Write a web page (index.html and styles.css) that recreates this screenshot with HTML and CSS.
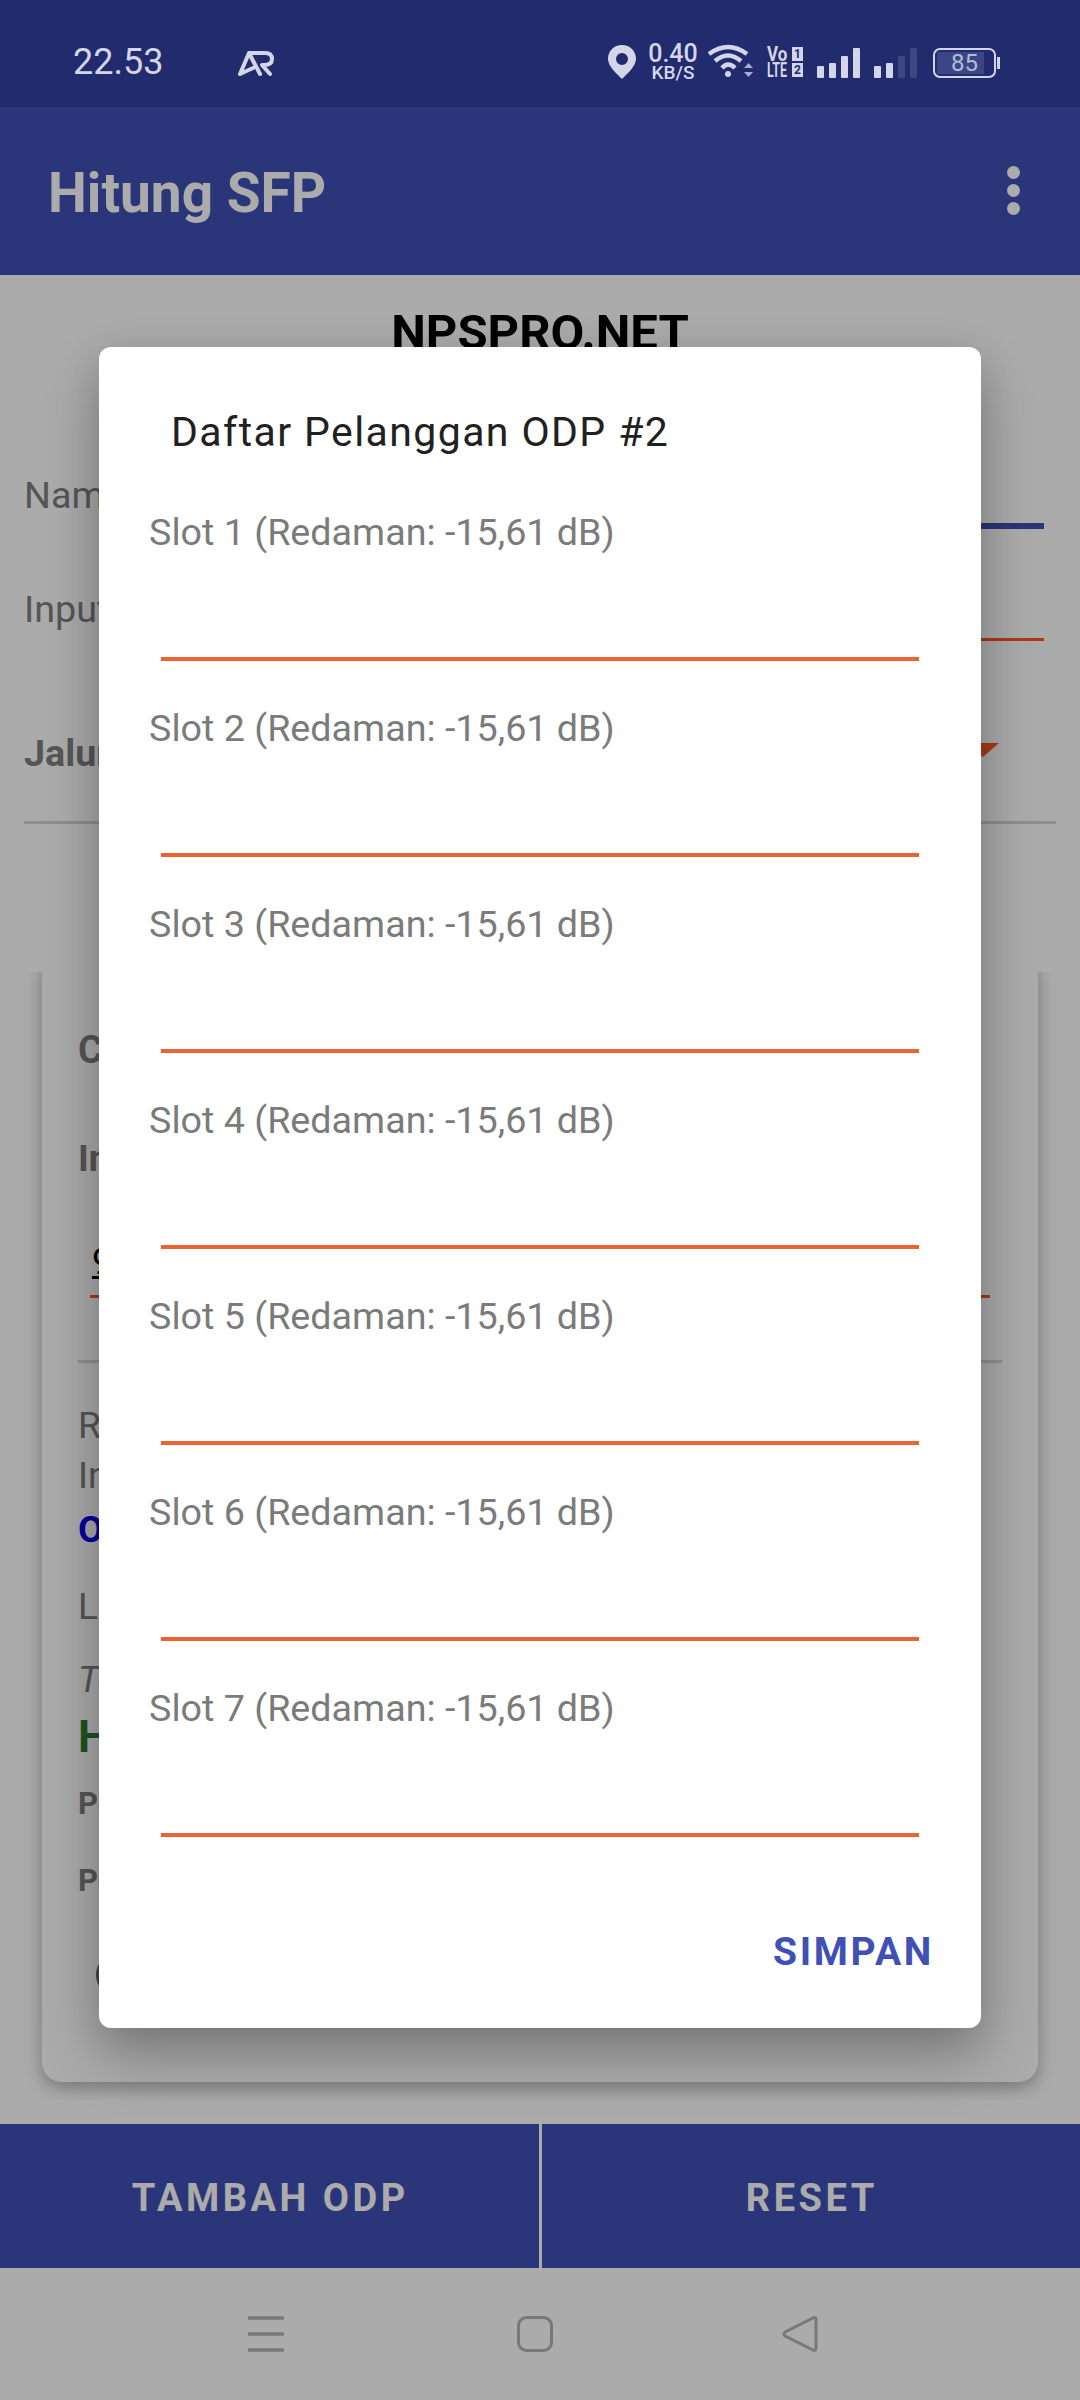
FILE: index.html
```html
<!DOCTYPE html>
<html lang="en">
<head>
  <meta charset="UTF-8">
  <meta name="viewport" content="width=device-width, initial-scale=1.0">
  <title>Hitung SFP</title>
  <link rel="stylesheet" href="styles.css">
</head>
<body>
  <div class="phone">
    <div class="status-bar">
      <span class="clock">22.53</span>
      <svg class="logo-ar" width="38" height="27" viewBox="0 0 38 27">
        <path d="M2 24 L11 3 L22 24 M2 24 L15 18 M11 3 H27 Q34 3 34 9 Q34 15 26 15 H24 L32 24" fill="none" stroke="#d3d6e8" stroke-width="4" stroke-linejoin="round" stroke-linecap="round"/>
      </svg>
      <div class="status-icons">
        <svg class="icon-pin" width="28" height="34" viewBox="0 0 28 34">
          <path fill-rule="evenodd" d="M14 0 C22 0 28 6 28 14 C28 21 20 28 14 34 C8 28 0 21 0 14 C0 6 6 0 14 0 Z M14 8 A6 6 0 1 0 14 20 A6 6 0 1 0 14 8 Z" fill="#d3d6e8"/>
        </svg>
        <div class="net-speed">
          <span class="net-value">0.40</span>
          <span class="net-unit">KB/S</span>
        </div>
        <svg class="icon-wifi" width="46" height="34" viewBox="0 0 46 34">
          <g fill="none" stroke="#d3d6e8" stroke-width="4.5">
            <path d="M1 10 Q20 -4 39 10"/>
            <path d="M7 17 Q20 6 33 17"/>
            <path d="M14 24 Q20 17 27 24"/>
          </g>
          <circle cx="20" cy="30" r="3" fill="#d3d6e8"/>
          <path d="M36 24 L40.500 19 L45 24 Z" fill="#a9aecf"/>
          <path d="M36 28 L45 28 L40.500 33 Z" fill="#a9aecf"/>
        </svg>
        <div class="volte">
          <div class="volte-row"><span class="volte-vo">Vo</span><span class="volte-sim">1</span></div>
          <div class="volte-row"><span class="volte-lte">LTE</span><span class="volte-sim">2</span></div>
        </div>
        <div class="signal signal-first">
          <i class="bar bar-1"></i><i class="bar bar-2"></i><i class="bar bar-3"></i><i class="bar bar-4"></i>
        </div>
        <div class="signal signal-second">
          <i class="bar bar-1"></i><i class="bar bar-2"></i><i class="bar bar-3 bar-off"></i><i class="bar bar-4 bar-off"></i>
        </div>
        <div class="battery">
          <div class="battery-body">
            <div class="battery-fill"></div>
            <span class="battery-text">85</span>
          </div>
          <div class="battery-nub"></div>
        </div>
      </div>
    </div>

    <div class="toolbar">
      <span class="toolbar-title">Hitung SFP</span>
      <div class="overflow-menu"><i></i><i></i><i></i></div>
    </div>

    <div class="content">
      <h1 class="page-heading">NPSPRO.NET</h1>
      <div class="form-row form-row-name">
        <span class="form-label">Nama</span>
        <div class="form-field form-field-focus"></div>
      </div>
      <div class="form-row form-row-input">
        <span class="form-label">Input</span>
        <div class="form-field"></div>
      </div>
      <div class="spinner-row">
        <span class="form-label form-label-bold">Jalur</span>
        <svg class="spinner-arrow" width="32" height="14" viewBox="0 0 32 14"><path d="M0 0 H32 L16 14 Z" fill="#ff5722"/></svg>
      </div>

      <div class="scroll-area">
        <div class="card">
          <div class="card-title">Cek</div>
          <div class="card-label">Input</div>
          <div class="card-input"><span>9</span></div>
          <div class="card-divider"></div>
          <div class="result result-first">Redaman</div>
          <div class="result">Input</div>
          <div class="result result-ok">OK</div>
          <div class="result result-loss">Loss</div>
          <div class="result result-note">Total</div>
          <div class="result result-good">H</div>
          <div class="result result-small">Port</div>
          <div class="result result-small result-small-next">Port</div>
          <div class="radio"></div>
        </div>
      </div>

      <div class="bottom-buttons">
        <div class="bottom-button">TAMBAH ODP</div>
        <div class="bottom-button">RESET</div>
      </div>
    </div>

    <div class="nav-bar">
      <svg class="nav-menu" width="36" height="36" viewBox="0 0 36 36">
        <path d="M0 2 H36 M0 18 H36 M0 34 H36" stroke="#b4b4b4" stroke-width="3.5"/>
      </svg>
      <svg class="nav-home" width="36" height="36" viewBox="0 0 36 36">
        <rect x="1.5" y="1.5" width="33" height="33" rx="8" fill="none" stroke="#b4b4b4" stroke-width="3"/>
      </svg>
      <svg class="nav-back" width="36" height="36" viewBox="0 0 36 36">
        <path d="M31 2 Q34 0.500 34 4 V32 Q34 35.500 31 34 L3 20 Q1 18 3 16 Z" fill="none" stroke="#b4b4b4" stroke-width="3" stroke-linejoin="round"/>
      </svg>
    </div>

    <div class="scrim"></div>

    <div class="dialog">
      <div class="dialog-title">Daftar Pelanggan ODP #2</div>
      <div class="slot">
        <label class="slot-label">Slot 1 (Redaman: -15,61 dB)</label>
        <div class="slot-input"></div>
      </div>
      <div class="slot">
        <label class="slot-label">Slot 2 (Redaman: -15,61 dB)</label>
        <div class="slot-input"></div>
      </div>
      <div class="slot">
        <label class="slot-label">Slot 3 (Redaman: -15,61 dB)</label>
        <div class="slot-input"></div>
      </div>
      <div class="slot">
        <label class="slot-label">Slot 4 (Redaman: -15,61 dB)</label>
        <div class="slot-input"></div>
      </div>
      <div class="slot">
        <label class="slot-label">Slot 5 (Redaman: -15,61 dB)</label>
        <div class="slot-input"></div>
      </div>
      <div class="slot">
        <label class="slot-label">Slot 6 (Redaman: -15,61 dB)</label>
        <div class="slot-input"></div>
      </div>
      <div class="slot">
        <label class="slot-label">Slot 7 (Redaman: -15,61 dB)</label>
        <div class="slot-input"></div>
      </div>
      <div class="dialog-actions">
        <span class="dialog-button">SIMPAN</span>
      </div>
    </div>
  </div>
</body>
</html>
```

FILE: styles.css
```css
* {
  box-sizing: border-box;
}

body {
  margin: 0;
  font-family: Roboto, "Noto Sans", sans-serif;
  background-color: #fff;
}

.phone {
  position: relative;
  width: 1080px;
  height: 2400px;
  display: flex;
  flex-direction: column;
  overflow: hidden;
}

/* status bar */
.status-bar {
  position: relative;
  z-index: 3;
  height: 107px;
  flex: none;
  display: flex;
  align-items: center;
  background-color: #212b6d;
  color: #d3d6e8;
  padding: 17px 0 0 73px;
}

.clock {
  width: 165px;
  font-size: 36px;
  font-weight: 400;
  line-height: 40px;
  margin-top: -1px;
}

.logo-ar {
  flex: none;
  margin-top: 3px;
}

.status-icons {
  display: flex;
  align-items: center;
  margin-left: 332px;
}

.icon-pin {
  flex: none;
  margin-top: -1px;
}

.net-speed {
  width: 52px;
  margin-left: 11px;
  display: flex;
  flex-direction: column;
  align-items: center;
  font-weight: 500;
}

.net-value {
  font-size: 25px;
  line-height: 20px;
}

.net-unit {
  font-size: 19px;
  line-height: 15px;
  margin-top: 1px;
}

.icon-wifi {
  flex: none;
  margin-left: 9px;
  margin-top: -3px;
}

.volte {
  margin-left: 13px;
  width: 36px;
  margin-top: -1px;
}

.volte-row {
  display: flex;
  justify-content: space-between;
  align-items: center;
  height: 16px;
}

.volte-vo,
.volte-lte {
  width: 21px;
  font-size: 20px;
  font-weight: 700;
  line-height: 16px;
  white-space: nowrap;
  transform-origin: left center;
}

.volte-vo {
  transform: scaleX(.85);
}

.volte-lte {
  transform: scaleX(.62);
}

.volte-sim {
  width: 11px;
  height: 14px;
  background-color: #d3d6e8;
  color: #212b6d;
  font-size: 12px;
  font-weight: 700;
  line-height: 14px;
  text-align: center;
}

.signal {
  display: flex;
  align-items: flex-end;
  gap: 5px;
  height: 30px;
  margin-top: 1px;
  margin-left: 14px;
}

.bar {
  display: block;
  width: 7px;
  border-radius: 1px;
  background-color: #d3d6e8;
}

.bar-1 {
  height: 12px;
}

.bar-2 {
  height: 15px;
}

.bar-3 {
  height: 22px;
}

.bar-4 {
  height: 30px;
}

.bar-off {
  background-color: #3b4682;
}

.battery {
  display: flex;
  align-items: center;
  margin-left: 16px;
  margin-top: 1px;
}

.battery-body {
  position: relative;
  width: 63px;
  height: 30px;
  border: 2px solid #d3d6e8;
  border-radius: 7px;
  padding: 2px;
}

.battery-fill {
  width: 85%;
  height: 100%;
  background-color: #3b4785;
}

.battery-text {
  position: absolute;
  inset: 0;
  text-align: center;
  font-size: 24px;
  line-height: 26px;
  color: #b4b9d8;
}

.battery-nub {
  width: 3px;
  height: 12px;
  margin-left: 1px;
  background-color: #d3d6e8;
}

/* toolbar */
.toolbar {
  height: 168px;
  flex: none;
  display: flex;
  align-items: center;
  justify-content: space-between;
  background-color: #3f51b5;
  color: #fff;
  padding: 0 60px 0 48px;
}

.toolbar-title {
  font-size: 55px;
  font-weight: 700;
  line-height: 60px;
  margin-top: 3px;
}

.overflow-menu {
  display: flex;
  flex-direction: column;
  gap: 5px;
  margin-top: -1px;
}

.overflow-menu i {
  display: block;
  width: 13px;
  height: 13px;
  border-radius: 50%;
  background-color: #fff;
}

/* main form behind the dialog */
.content {
  flex: 1;
  display: flex;
  flex-direction: column;
  background-color: #fff;
}

.page-heading {
  margin: 33px 0 0;
  text-align: center;
  font-size: 49px;
  font-weight: 700;
  line-height: 50px;
  color: #000;
}

.form-row {
  display: flex;
  padding: 0 36px 0 24px;
  color: #808080;
}

.form-row-name {
  margin-top: 112px;
  height: 59px;
}

.form-row-input {
  margin-top: 55px;
  height: 57px;
}

.form-label {
  width: 300px;
  font-size: 37.7px;
  line-height: 50px;
}

.form-label-bold {
  font-weight: 700;
}

.form-field {
  flex: 1;
  border-bottom: 3px solid #ff5722;
}

.form-field-focus {
  border-bottom: 6px solid #3f51b5;
}

.spinner-row {
  display: flex;
  justify-content: space-between;
  height: 96px;
  margin: 87px 24px 0;
  border-bottom: 3px solid #d4d4d4;
  color: #808080;
}

.spinner-arrow {
  margin: 15px 57px 0 0;
}

.scroll-area {
  height: 1128px;
  margin: 148px 24px 0;
  padding: 0 18px;
  overflow: hidden;
}

.card {
  height: 1130px;
  margin-top: -20px;
  padding: 73px 36px 0;
  border-radius: 20px;
  background-color: #fff;
  box-shadow: 0 6px 18px rgba(0, 0, 0, .3);
  color: #808080;
  font-size: 37px;
  line-height: 50px;
}

.card-title {
  font-weight: 700;
  font-size: 38px;
}

.card-label {
  margin-top: 59px;
  font-weight: 700;
}

.card-input {
  height: 61px;
  margin: 53px 12px 0;
  padding-left: 2px;
  border-bottom: 3px solid #ff5722;
  color: #000;
}

.card-input span {
  text-decoration: underline;
}

.card-divider {
  height: 3px;
  margin-top: 62px;
  background-color: #d8d8d8;
}

.result-first {
  margin-top: 38px;
}

.result-ok {
  margin-top: 4px;
  color: #0000ee;
  font-weight: 700;
}

.result-loss {
  margin-top: 27px;
}

.result-note {
  margin-top: 23px;
  font-style: italic;
}

.result-good {
  margin-top: 7px;
  color: #2e7d32;
  font-size: 44px;
  font-weight: 700;
}

.result-small {
  margin-top: 17px;
  font-size: 31px;
  font-weight: 700;
}

.result-small-next {
  margin-top: 27px;
}

.radio {
  width: 44px;
  height: 44px;
  margin: 47px 0 0 18px;
  border: 5px solid #666;
  border-radius: 50%;
}

.bottom-buttons {
  display: flex;
  height: 144px;
  margin-top: 24px;
  background-color: #3f51b5;
}

.bottom-button {
  flex: 1;
  display: flex;
  align-items: center;
  justify-content: center;
  padding: 4px 0 0 2px;
  color: #fff;
  font-size: 38px;
  font-weight: 700;
  letter-spacing: 3.5px;
}

.bottom-button + .bottom-button {
  border-left: 3px solid #fff;
}

/* nav bar */
.nav-bar {
  height: 132px;
  flex: none;
  display: flex;
  align-items: center;
  padding: 0 0 0 248px;
  background-color: #fff;
}

.nav-home {
  margin-left: 233px;
}

.nav-back {
  margin-left: 229px;
}

/* dialog on top of the page */
.scrim {
  position: absolute;
  inset: 107px 0 0 0;
  z-index: 1;
  background-color: rgba(0, 0, 0, .33);
}

.dialog {
  position: absolute;
  z-index: 2;
  top: 347px;
  left: 99px;
  width: 882px;
  height: 1681px;
  padding: 60px 47px 0 50px;
  border-radius: 12px;
  background-color: #fff;
  box-shadow: 0 30px 60px rgba(0, 0, 0, .22), 0 10px 40px rgba(0, 0, 0, .14);
}

.dialog-title {
  margin: 0 0 50px 22px;
  font-size: 41px;
  line-height: 50px;
  letter-spacing: 1.4px;
  color: #212121;
}

.slot {
  height: 196px;
}

.slot-label {
  display: block;
  font-size: 37.7px;
  line-height: 50px;
  color: #7b7b7b;
}

.slot-input {
  height: 104px;
  margin: 0 15px 0 12px;
  border-bottom: 4px solid #ee6232;
}

.dialog-actions {
  display: flex;
  justify-content: flex-end;
  margin-top: 48px;
}

.dialog-button {
  font-size: 39px;
  font-weight: 700;
  line-height: 50px;
  letter-spacing: 2.6px;
  color: #3f51b5;
}
```
